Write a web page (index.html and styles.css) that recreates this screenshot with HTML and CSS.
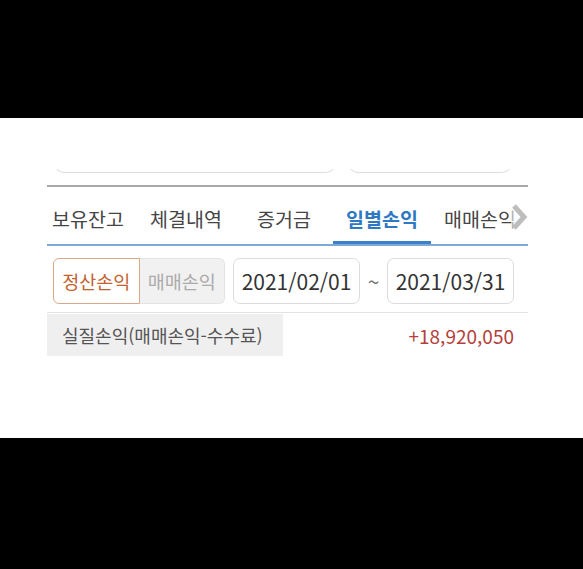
FILE: index.html
```html
<!DOCTYPE html>
<html lang="ko">
<head>
<meta charset="utf-8">
<link rel="stylesheet" href="styles.css">
</head>
<body>
<div class="band-top"></div>
<main class="screen">
  <div class="inputs">
    <div class="field field-wide"></div>
    <div class="field field-narrow"></div>
  </div>
  <div class="divider"></div>
  <nav class="tabs">
    <div class="tab-strip">
      <div class="tab">보유잔고</div>
      <div class="tab">체결내역</div>
      <div class="tab">증거금</div>
      <div class="tab active">일별손익</div>
      <div class="tab">매매손익</div>
    </div>
    <div class="more">
      <svg width="17" height="28" viewBox="0 0 17 28"><polyline points="3,3 13,14 3,25" fill="none" stroke="#bdbdbd" stroke-width="5" stroke-linejoin="miter"/></svg>
    </div>
  </nav>
  <div class="filters">
    <div class="toggle">
      <div class="seg seg-on">정산손익</div>
      <div class="seg seg-off">매매손익</div>
    </div>
    <div class="date">2021/02/01</div>
    <div class="tilde">~</div>
    <div class="date">2021/03/31</div>
  </div>
  <div class="result">
    <div class="label">실질손익(매매손익-수수료)</div>
    <div class="value">+18,920,050</div>
  </div>
</main>
<div class="band-bottom"></div>
</body>
</html>
```

FILE: styles.css
```css
html, body {
  margin: 0;
  padding: 0;
  background: #000;
  font-family: "Noto Sans CJK KR", "Noto Sans", sans-serif;
}
.band-top { height: 118px; }
.band-bottom { height: 131px; }
.screen {
  background: #fff;
  height: 320px;
  padding: 0 55px 0 47px;
  box-sizing: border-box;
}
.inputs {
  height: 55px;
  display: flex;
  align-items: flex-end;
  gap: 10px;
  padding-left: 6px;
  overflow: hidden;
}
.field {
  height: 40px;
  border: 1px solid transparent;
  border-bottom-color: #dedede;
  border-radius: 0 0 12px 12px;
  box-sizing: border-box;
}
.field-wide { width: 284px; }
.field-narrow { width: 166px; }
.divider {
  margin-top: 12px;
  height: 2px;
  background: #a9a9a9;
}
.tabs {
  position: relative;
  height: 59px;
  border-bottom: 2px solid #7ea8d6;
  box-sizing: border-box;
  overflow: hidden;
}
.tab-strip {
  display: flex;
  margin-left: -8px;
  height: 100%;
}
.tab {
  flex: 0 0 98px;
  display: flex;
  align-items: center;
  justify-content: center;
  font-size: 19.5px;
  color: #454545;
  box-sizing: border-box;
  padding-top: 5px;
}
.tab.active {
  color: #2f78c2;
  font-weight: 700;
  border-bottom: 3px solid #3b80c8;
  padding-top: 8px;
}
.more {
  position: absolute;
  right: 0;
  top: 16px;
  width: 17px;
  height: 28px;
  background: rgba(255,255,255,0.6);
}
.more svg { display: block; }
.filters {
  display: flex;
  align-items: center;
  height: 67px;
  padding: 3px 0 0 6px;
  border-bottom: 1px solid #e3e3e3;
  box-sizing: border-box;
}
.toggle {
  display: flex;
  width: 172px;
  height: 46px;
  margin-right: 8px;
}
.seg {
  flex: 1;
  display: flex;
  align-items: center;
  justify-content: center;
  font-size: 18.5px;
  box-sizing: border-box;
}
.seg-on {
  color: #c2622f;
  background: #fff;
  border: 1px solid #d8a98a;
  border-radius: 6px 0 0 6px;
}
.seg-off {
  color: #ababab;
  background: #f1f1f1;
  border: 1px solid #e4e4e4;
  border-left: none;
  border-radius: 0 6px 6px 0;
}
.date {
  width: 127px;
  height: 46px;
  border: 1px solid #dcdcdc;
  border-radius: 7px;
  display: flex;
  align-items: center;
  justify-content: center;
  font-size: 21px;
  color: #333;
  box-sizing: border-box;
}
.tilde {
  width: 27px;
  text-align: center;
  font-size: 21px;
  color: #777;
}
.result {
  display: flex;
  align-items: center;
  justify-content: space-between;
  height: 42px;
  margin-top: 1px;
}
.label {
  width: 236px;
  height: 100%;
  background: #efefef;
  display: flex;
  align-items: center;
  padding-left: 15px;
  box-sizing: border-box;
  font-size: 18px;
  color: #555;
}
.value {
  padding-right: 14px;
  font-size: 19px;
  color: #b3403b;
}
```
